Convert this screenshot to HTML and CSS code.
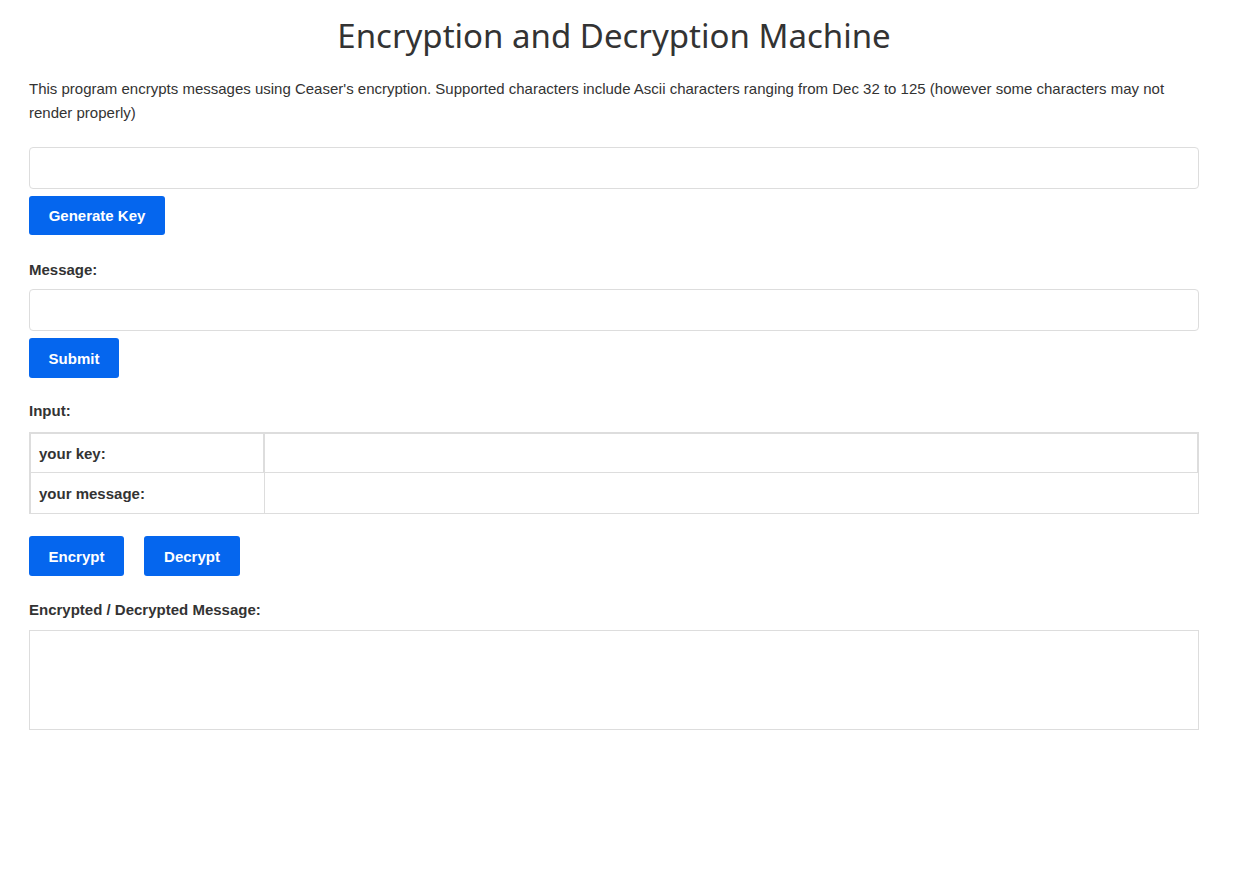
FILE: index.html
```html
<!DOCTYPE html>
<html>
<head>
<meta charset="utf-8">
<title>Encryption and Decryption Machine</title>
<link rel="stylesheet" href="styles.css">
</head>
<body>
<div class="container">
  <h1 class="title">Encryption and Decryption Machine</h1>
  <p class="intro">This program encrypts messages using Ceaser's encryption. Supported characters include Ascii characters ranging from Dec 32 to 125 (however some characters may not render properly)</p>

  <input class="field key-field" type="text">
  <div class="btn-row"><button class="btn btn-key">Generate Key</button></div>

  <label class="label msg-label">Message:</label>
  <input class="field" type="text">
  <div class="btn-row"><button class="btn btn-submit">Submit</button></div>

  <label class="label input-label">Input:</label>
  <table class="input-table">
    <tr class="row-key">
      <td class="cell-name">your key:</td>
      <td class="cell-value"></td>
    </tr>
    <tr class="row-msg">
      <td class="cell-name">your message:</td>
      <td class="cell-value"></td>
    </tr>
  </table>

  <div class="action-row">
    <button class="btn btn-action">Encrypt</button>
    <button class="btn btn-action">Decrypt</button>
  </div>

  <label class="label out-label">Encrypted / Decrypted Message:</label>
  <div class="output"></div>
</div>
</body>
</html>
```
FILE: styles.css
```css
html, body {
  margin: 0;
  padding: 0;
  background: #fff;
}
body {
  font-family: "Liberation Sans", Arial, sans-serif;
  color: #333;
  font-size: 15px;
}
.container {
  width: 1170px;
  padding: 0 0 0 29px;
  display: flex;
  flex-direction: column;
  align-items: flex-start;
}
.title {
  align-self: stretch;
  text-align: center;
  font-family: "Noto Sans", "Open Sans", sans-serif;
  font-weight: 400;
  font-size: 33px;
  line-height: 46px;
  margin: 13px 0 0 0;
  color: #333;
}
.intro {
  margin: 18px 0 0 0;
  line-height: 24px;
  font-size: 15px;
}
.field {
  box-sizing: border-box;
  width: 1170px;
  height: 42px;
  border: 1px solid #ddd;
  border-radius: 4px;
  margin: 22px 0 0 0;
  padding: 0 10px;
  font: inherit;
  outline: none;
}
.btn-row {
  margin-top: 7px;
  display: flex;
}
.btn {
  background: #0566ee;
  color: #fff;
  border: none;
  border-radius: 3px;
  font-family: "Liberation Sans", Arial, sans-serif;
  font-weight: 700;
  font-size: 15px;
  height: 40px;
  padding: 0 20px;
  cursor: pointer;
}
.btn-key { height: 39px; width: 136px; padding: 0; }
.btn-submit { width: 90px; padding: 0; }
.label {
  display: block;
  font-weight: 700;
  font-size: 15px;
  line-height: 18px;
}
.msg-label { margin-top: 26px; }
.msg-label + .field { margin-top: 10px; }
.input-label { margin-top: 24px; }
.input-table {
  margin-top: 12px;
  width: 1170px;
  border: 1px solid #ddd;
  border-collapse: separate;
  border-spacing: 0;
}
.input-table td {
  height: 38px;
  padding: 0 0 0 8px;
  font-weight: 700;
  font-size: 15px;
  border-top: 1px solid #ddd;
  border-left: 1px solid #ddd;
}
.row-key td { border-bottom: 1px solid #ddd; border-right: 1px solid #ddd; }
.row-msg td { border-top: none; height: 40px; }
.row-msg .cell-value { border-left: 1px solid #ddd; }
.cell-name { width: 224px; }
.action-row {
  margin-top: 22px;
  display: flex;
  gap: 20px;
}
.btn-action { width: 95px; padding: 0; }
.btn-action + .btn-action { width: 96px; }
.out-label { margin-top: 25px; }
.output {
  margin-top: 11px;
  box-sizing: border-box;
  width: 1170px;
  height: 100px;
  border: 1px solid #ddd;
}
```
